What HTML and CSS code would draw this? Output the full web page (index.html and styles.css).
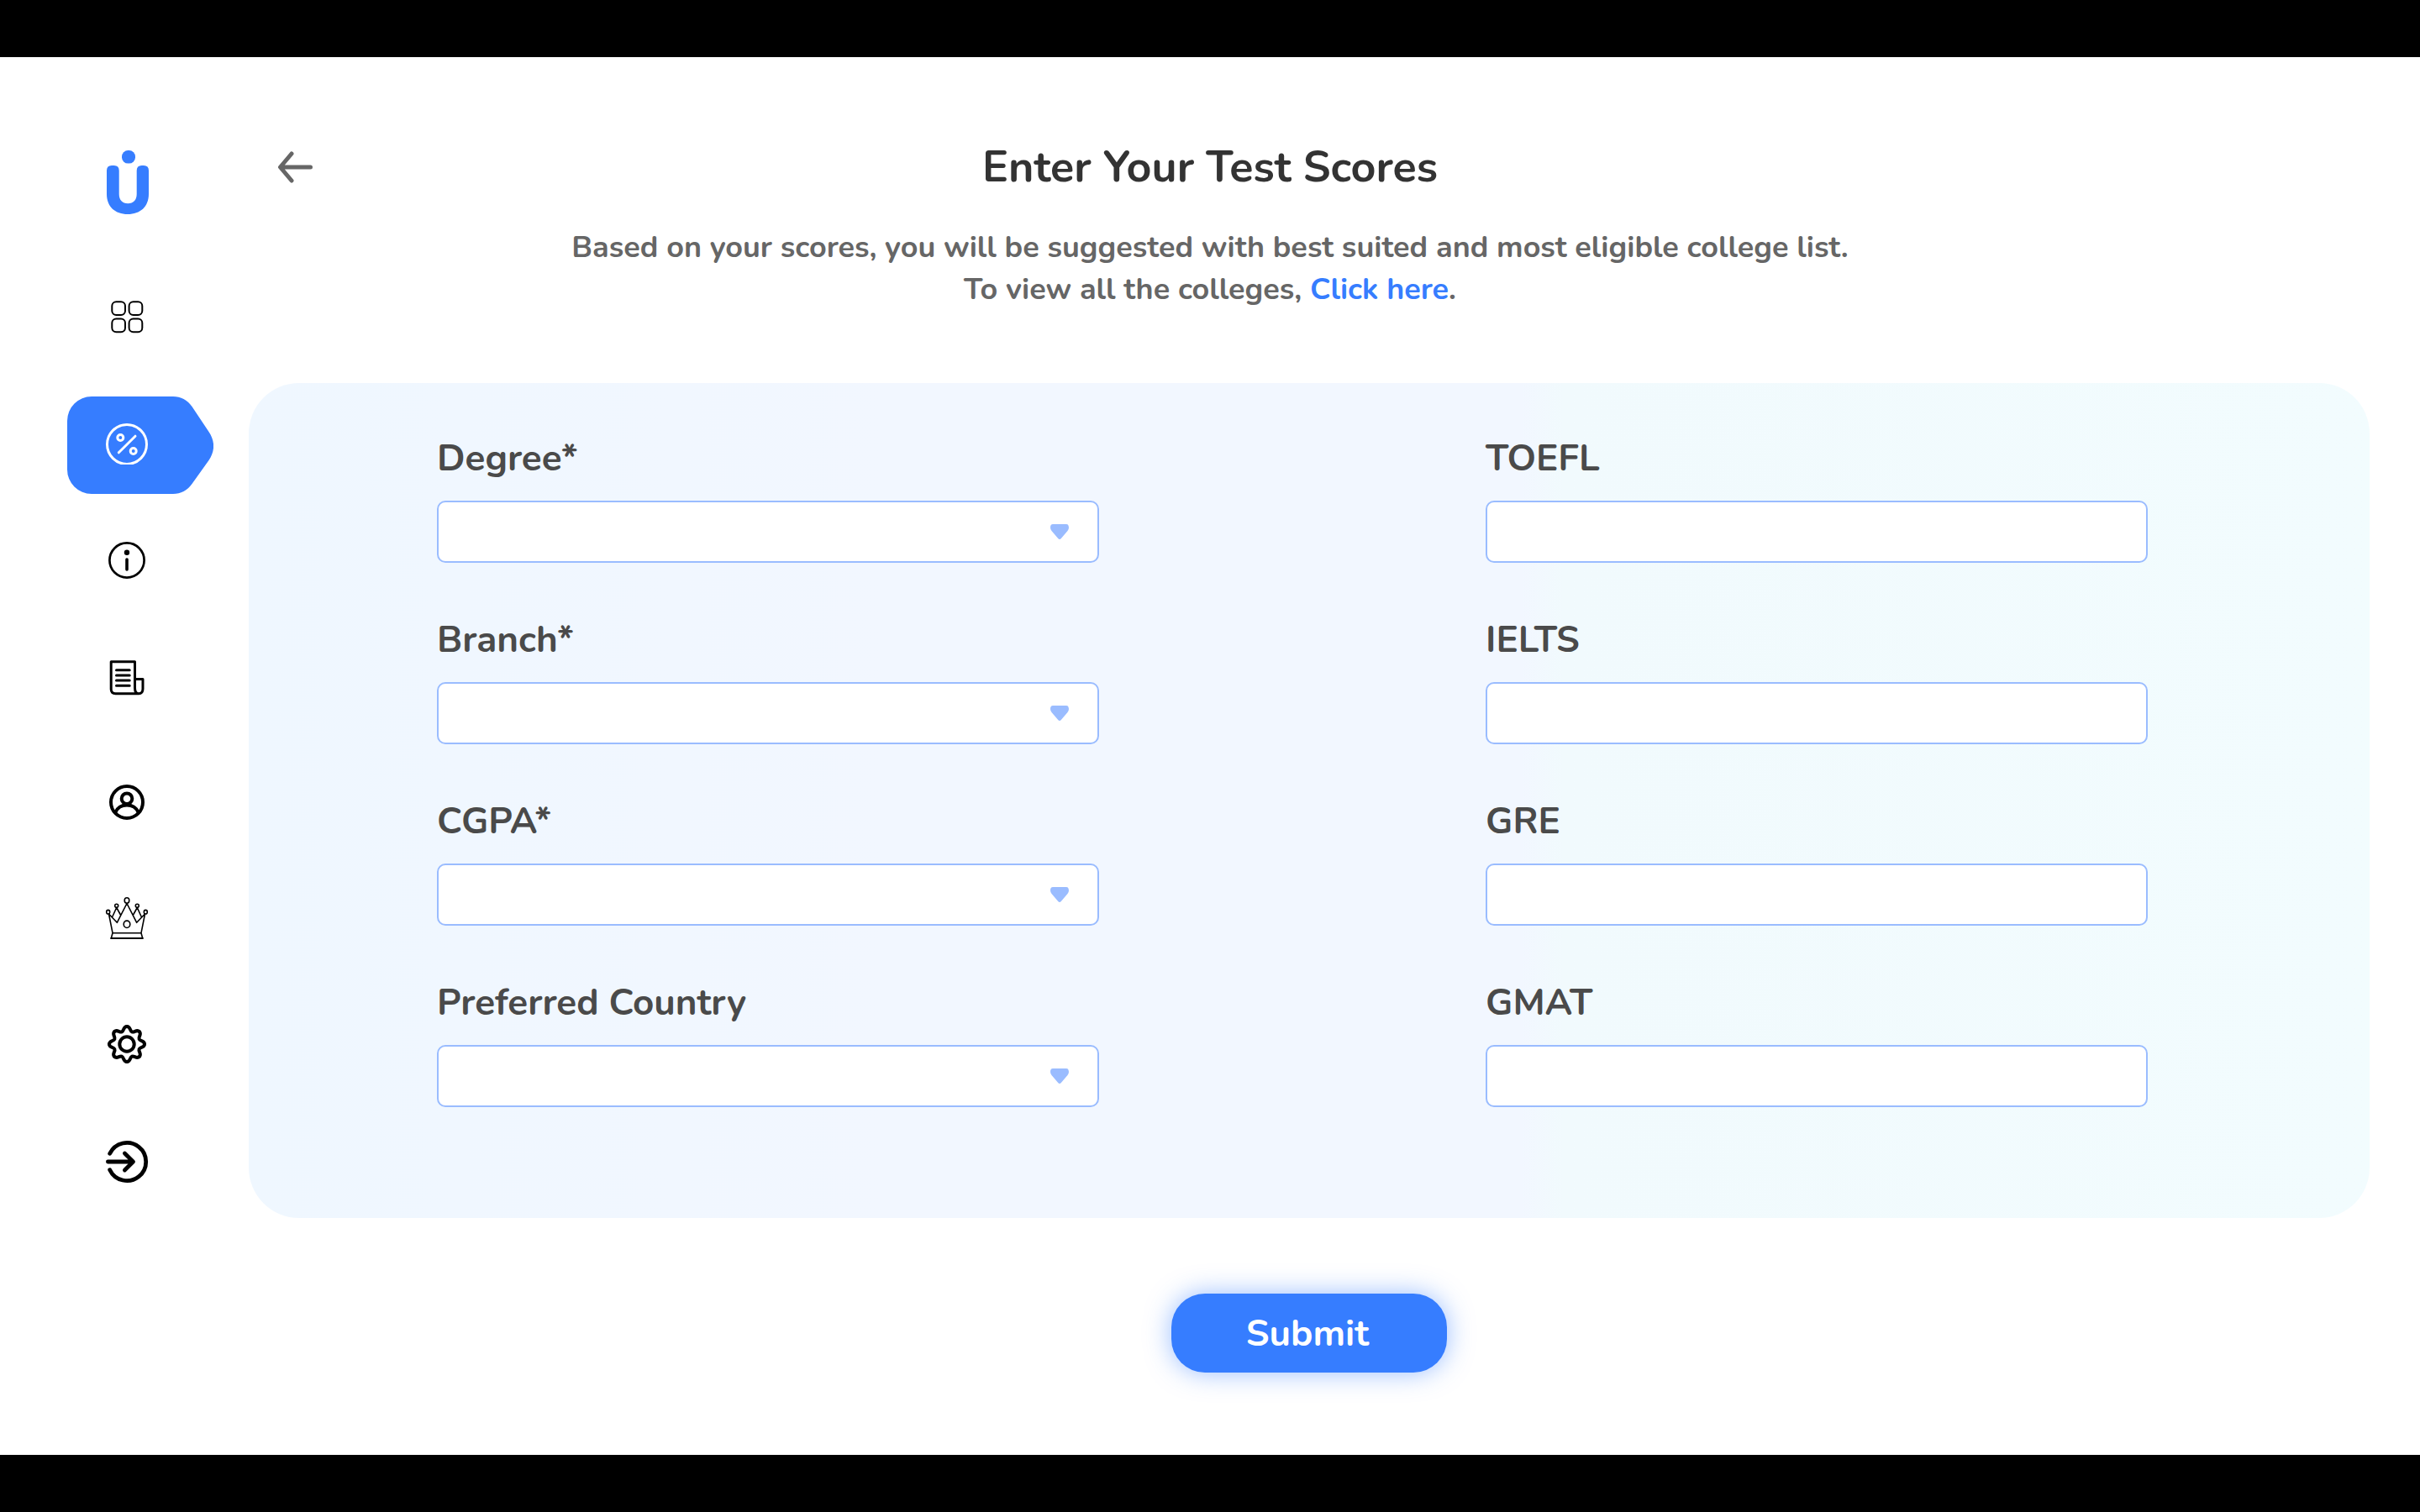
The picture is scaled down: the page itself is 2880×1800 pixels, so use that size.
FILE: index.html
```html
<!DOCTYPE html>
<html lang="en">
<head>
<meta charset="utf-8">
<meta name="viewport" content="width=device-width, initial-scale=1">
<title>Enter Your Test Scores</title>
<link rel="stylesheet" href="styles.css">
</head>
<body>
<div class="page">
  <aside class="sidebar">
    <a class="logo" href="#" aria-label="Home">
      <svg class="logo-mark" viewBox="0 0 64 80" aria-hidden="true"><rect x="26" y="2" width="16" height="15.6" rx="7.4"/><path d="M8 26q0-6 6-6h2.7q6 0 6 6V54c0 7 4 11.3 10.5 11.3S43.7 61 43.7 54V26q0-6 6-6H52q6 0 6 6V54c0 15-10 24-25 24S8 69 8 54z"/></svg>
    </a>
    <nav class="nav" aria-label="Main">
      <a class="nav-item" href="#" aria-label="Dashboard"><svg class="icon" viewBox="0 0 64 64" stroke-width="2"><rect x="14.3" y="14.3" width="15.7" height="15.7" rx="5"/><rect x="34.6" y="14.3" width="15.7" height="15.7" rx="5"/><rect x="14.3" y="34.6" width="15.7" height="15.7" rx="5"/><rect x="34.6" y="34.6" width="15.7" height="15.7" rx="5"/></svg></a>
      <a class="nav-item active" href="#" aria-label="Test scores" aria-current="page">
        <svg class="marker" viewBox="0 0 174 116" aria-hidden="true"><path d="M29 0H126C135 0 143 4 148.500 12L168.500 42C176 53 176 65 168.500 76L148.500 104C143 112 135 116 126 116H29A29 29 0 0 1 0 87V29A29 29 0 0 1 29 0Z"/></svg>
        <svg class="icon" viewBox="0 0 64 64" stroke-width="3"><circle cx="32" cy="40" r="23.500"/><path d="M22.300 49.800L42 30.200"/><circle cx="24.300" cy="32" r="3.500"/><circle cx="39.700" cy="48" r="3.500"/></svg>
      </a>
      <a class="nav-item" href="#" aria-label="Information"><svg class="icon" viewBox="0 0 64 64" stroke-width="2.700"><circle cx="32" cy="34" r="20.600"/><circle cx="32" cy="24.700" r="3.200" fill="currentColor" stroke="none"/><path d="M32 33V45" stroke-width="3.600"/></svg></a>
      <a class="nav-item" href="#" aria-label="News"><svg class="icon" viewBox="0 0 64 64" stroke-width="3"><path d="M46 48.800H18.500Q13.200 48.800 13.200 43.500V10.800H41.500V42Q41.500 48.800 46.200 48.800T51 43V31.500H41.500M19.500 20.700H35.200M19.500 26.900H35.200M19.500 33.100H35.200M19.500 39.300H35.200"/></svg></a>
      <a class="nav-item" href="#" aria-label="Profile"><svg class="icon" viewBox="0 0 64 64" stroke-width="4"><circle cx="32" cy="34" r="19"/><circle cx="32" cy="29.700" r="6.300"/><path d="M18.500 46C21 40 26 37.500 32 37.500S43 40 45.500 46"/></svg></a>
      <a class="nav-item" href="#" aria-label="Premium"><svg class="icon" viewBox="0 0 64 64" stroke-width="1.600"><ellipse cx="32" cy="7" rx="2.800" ry="3.200"/><circle cx="19.700" cy="13.300" r="2"/><circle cx="44.300" cy="13.300" r="2"/><ellipse cx="9.700" cy="20.700" rx="2" ry="2.300"/><ellipse cx="54.300" cy="20.700" rx="2" ry="2.300"/><ellipse cx="32" cy="35.300" rx="3.800" ry="4.200"/><path d="M10.500 23L15 45.700H49L53.500 23L43.700 33.300L32 10.500L20.300 33.300L10.500 23M14.700 26.500L19.700 15.500L24.700 24.500M49.300 26.500L44.300 15.500L39.300 24.500M15 45.700L13.300 52M49 45.700L50.700 52"/><path d="M13.300 52H50.700" stroke-width="2.200"/></svg></a>
      <a class="nav-item" href="#" aria-label="Settings"><svg class="icon" viewBox="0 0 64 64" stroke-width="4"><circle cx="32" cy="34" r="8.700"/><path id="tooth" d="M32 13C36.500 13 35.300 18.300 38.050 19.400C40.850 20.550 43.670 15.970 46.850 19.150"/><use href="#tooth" transform="rotate(45 32 34)"/><use href="#tooth" transform="rotate(90 32 34)"/><use href="#tooth" transform="rotate(135 32 34)"/><use href="#tooth" transform="rotate(180 32 34)"/><use href="#tooth" transform="rotate(225 32 34)"/><use href="#tooth" transform="rotate(270 32 34)"/><use href="#tooth" transform="rotate(315 32 34)"/></svg></a>
      <a class="nav-item" href="#" aria-label="Log out"><svg class="icon" viewBox="0 0 64 64" stroke-width="4.800"><path d="M11.700 20.300A22.600 22.600 0 1 1 11.700 39.700M9.400 30H39M29.400 20L39.500 30L29.400 40"/></svg></a>
    </nav>
  </aside>

  <main class="main">
    <header class="header">
      <button class="back" type="button" aria-label="Back"><svg class="back-icon" viewBox="0 0 44 38" aria-hidden="true"><path d="M17 3L3.500 19L17 35M4 19H39.500"/></svg></button>
      <div class="heading">
        <h1 class="title">Enter Your Test Scores</h1>
        <p class="subtitle">Based on your scores, you will be suggested with best suited and most eligible college list.<br>To view all the colleges, <a class="link" href="#">Click here</a>.</p>
      </div>
    </header>

    <form class="form">
      <div class="panel">
        <div class="column">
          <div class="field">
            <label class="label" for="degree">Degree*</label>
            <div class="select-wrap"><select class="control" id="degree"><option value=""></option></select><svg class="caret" viewBox="0 0 22 18" aria-hidden="true"><path d="M3 0H19Q22 0 22 4Q22 6 20.500 8L13 16.800Q11 19.200 9 16.800L1.500 8Q0 6 0 4Q0 0 3 0Z"/></svg></div>
          </div>
          <div class="field">
            <label class="label" for="branch">Branch*</label>
            <div class="select-wrap"><select class="control" id="branch"><option value=""></option></select><svg class="caret" viewBox="0 0 22 18" aria-hidden="true"><path d="M3 0H19Q22 0 22 4Q22 6 20.500 8L13 16.800Q11 19.200 9 16.800L1.500 8Q0 6 0 4Q0 0 3 0Z"/></svg></div>
          </div>
          <div class="field">
            <label class="label" for="cgpa">CGPA*</label>
            <div class="select-wrap"><select class="control" id="cgpa"><option value=""></option></select><svg class="caret" viewBox="0 0 22 18" aria-hidden="true"><path d="M3 0H19Q22 0 22 4Q22 6 20.500 8L13 16.800Q11 19.200 9 16.800L1.500 8Q0 6 0 4Q0 0 3 0Z"/></svg></div>
          </div>
          <div class="field">
            <label class="label" for="country">Preferred Country</label>
            <div class="select-wrap"><select class="control" id="country"><option value=""></option></select><svg class="caret" viewBox="0 0 22 18" aria-hidden="true"><path d="M3 0H19Q22 0 22 4Q22 6 20.500 8L13 16.800Q11 19.200 9 16.800L1.500 8Q0 6 0 4Q0 0 3 0Z"/></svg></div>
          </div>
        </div>
        <div class="column">
          <div class="field"><label class="label" for="toefl">TOEFL</label><input class="control" id="toefl" type="text"></div>
          <div class="field"><label class="label" for="ielts">IELTS</label><input class="control" id="ielts" type="text"></div>
          <div class="field"><label class="label" for="gre">GRE</label><input class="control" id="gre" type="text"></div>
          <div class="field"><label class="label" for="gmat">GMAT</label><input class="control" id="gmat" type="text"></div>
        </div>
      </div>
      <button class="submit" type="submit">Submit</button>
    </form>
  </main>
</div>
</body>
</html>
```
FILE: styles.css
```css
* {
  box-sizing: border-box;
}

body {
  margin: 0;
  padding: 68px 0;
  background: #000;
  font-family: Nunito, "Open Sans", "Noto Sans", sans-serif;
  font-weight: 700;
}

.page {
  display: flex;
  min-height: calc(100vh - 136px);
  background: #fff;
}

.sidebar {
  display: flex;
  flex: none;
  flex-direction: column;
  gap: 88px;
  width: 296px;
  padding: 109px 0 0 119px;
}

.logo {
  width: 64px;
  height: 80px;
}

.logo-mark {
  display: block;
  width: 64px;
  height: 80px;
  fill: #367dff;
}

.nav {
  display: flex;
  flex-direction: column;
  gap: 80px;
}

.nav-item {
  position: relative;
  width: 64px;
  height: 64px;
  color: #000;
}

.active {
  color: #fff;
}

.icon {
  position: relative;
  display: block;
  width: 64px;
  height: 64px;
  fill: none;
  stroke: currentColor;
  stroke-linecap: round;
  stroke-linejoin: round;
}

/* Arrow-shaped plate behind the current nav item */
.marker {
  position: absolute;
  top: -17px;
  left: -39px;
  width: 174px;
  height: 116px;
  fill: #367dff;
}

.main {
  flex: 1;
  min-width: 0;
  padding: 96px 60px 98px 0;
}

.header {
  display: grid;
  grid-template-columns: 120px 1fr 120px;
  align-items: start;
  padding-right: 236px;
}

.back {
  display: flex;
  align-items: center;
  height: 70px;
  padding: 0 0 0 34px;
  border: 0;
  background: none;
  cursor: pointer;
}

.back-icon {
  width: 44px;
  height: 38px;
  fill: none;
  stroke: #666;
  stroke-width: 5;
  stroke-linecap: round;
  stroke-linejoin: round;
}

.heading {
  text-align: center;
}

.title {
  margin: 0;
  color: #333;
  font-size: 52px;
  font-weight: 700;
  line-height: 70px;
}

.subtitle {
  margin: 36px 0 0;
  color: #666;
  font-size: 36px;
  line-height: 50px;
}

.link {
  color: #367dff;
  text-decoration: none;
}

.form {
  display: flex;
  flex-direction: column;
  align-items: center;
  gap: 90px;
  margin-top: 86px;
}

.panel {
  display: grid;
  grid-template-columns: 1fr 1fr;
  gap: 460px;
  width: 100%;
  padding: 60px 264px 132px 224px;
  border-radius: 60px;
  background: linear-gradient(90deg, #eff7ff, #f2f7ff 30%, #f2f7ff 60%, #f1fafd 62%, #f2fcfe);
}

.column {
  display: flex;
  flex-direction: column;
  gap: 62px;
}

.field {
  display: flex;
  flex-direction: column;
  gap: 20px;
}

.label {
  color: #4a4a4a;
  font-size: 44px;
  line-height: 60px;
}

.select-wrap {
  position: relative;
}

.control {
  display: block;
  width: 100%;
  height: 74px;
  padding: 0 24px;
  border: 2px solid #9abcff;
  border-radius: 10px;
  background: #fff;
  color: #333;
  font: inherit;
  font-size: 36px;
  appearance: none;
}

.caret {
  position: absolute;
  top: 28px;
  right: 36px;
  width: 22px;
  height: 18px;
  fill: #9abcff;
  pointer-events: none;
}

.submit {
  width: 328px;
  height: 94px;
  padding: 2px 4px 0 0;
  border: 0;
  border-radius: 40px;
  background: #367dff;
  box-shadow: 0 0 30px rgba(54, 125, 255, 0.5);
  color: #fff;
  font: inherit;
  font-size: 44px;
  cursor: pointer;
}
```
